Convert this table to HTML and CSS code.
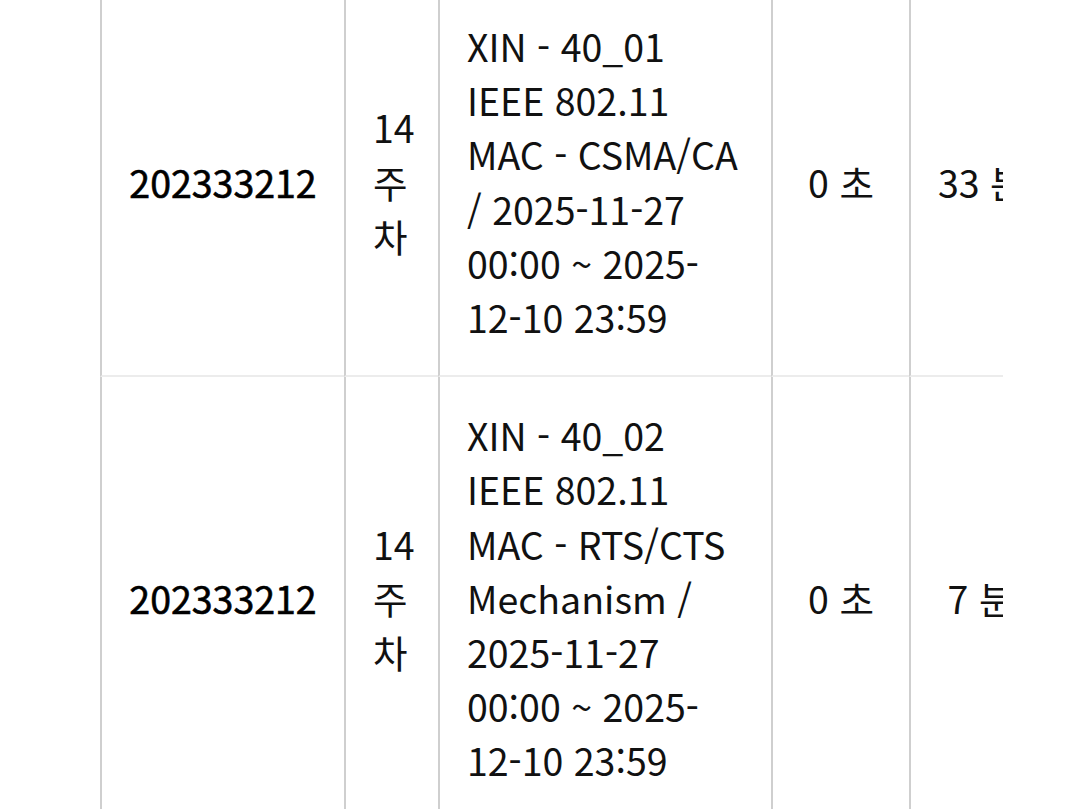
FILE: index.html
```html
<!DOCTYPE html>
<html lang="ko">
<head>
<meta charset="utf-8">
<title>학습 현황</title>
<link rel="stylesheet" href="styles.css">
</head>
<body>
<div class="table-wrap">
  <table class="grid">
    <colgroup>
      <col class="c-id">
      <col class="c-week">
      <col class="c-title">
      <col class="c-time">
      <col class="c-total">
    </colgroup>
    <tbody>
      <tr>
        <td class="id">202333212</td>
        <td class="week">14 주차</td>
        <td class="title">XIN - 40_01 IEEE 802.11 MAC - CSMA/CA / 2025-11-27 00:00 ~ 2025-12-10 23:59</td>
        <td class="center">0 초</td>
        <td class="center">33 분</td>
      </tr>
      <tr>
        <td class="id">202333212</td>
        <td class="week">14 주차</td>
        <td class="title">XIN - 40_02 IEEE 802.11 MAC - RTS/CTS Mechanism / 2025-11-27 00:00 ~ 2025-12-10 23:59</td>
        <td class="center">0 초</td>
        <td class="center">7 분</td>
      </tr>
    </tbody>
  </table>
</div>
</body>
</html>
```

FILE: styles.css
```css
html, body {
  margin: 0;
  padding: 0;
  background: #ffffff;
}

body {
  font-family: "Noto Sans CJK KR", "Noto Sans", sans-serif;
  font-size: 37.5px;
  line-height: 54.2px;
  color: #111111;
}

.table-wrap {
  margin-left: 100px;
  margin-top: -12px;
  width: 903px;
  overflow: hidden;
}

.grid {
  border-collapse: separate;
  border-spacing: 0;
  table-layout: fixed;
  width: 950px;
}

.c-id { width: 244px; }
.c-week { width: 94px; }
.c-title { width: 333px; }
.c-time { width: 138px; }
.c-total { width: 141px; }

.grid td {
  box-sizing: border-box;
  border-left: 2px solid #cfcfcf;
  border-bottom: 2px solid #ececec;
  padding: 31px 27px;
  vertical-align: middle;
}

.grid td.week {
  text-align: left;
}

.grid td.id {
  text-align: center;
  color: #000000;
  -webkit-text-stroke: 0.6px #000000;
}

.grid td.title {
  text-align: left;
  overflow-wrap: break-word;
}

.grid td.center {
  text-align: center;
  white-space: nowrap;
}
```
